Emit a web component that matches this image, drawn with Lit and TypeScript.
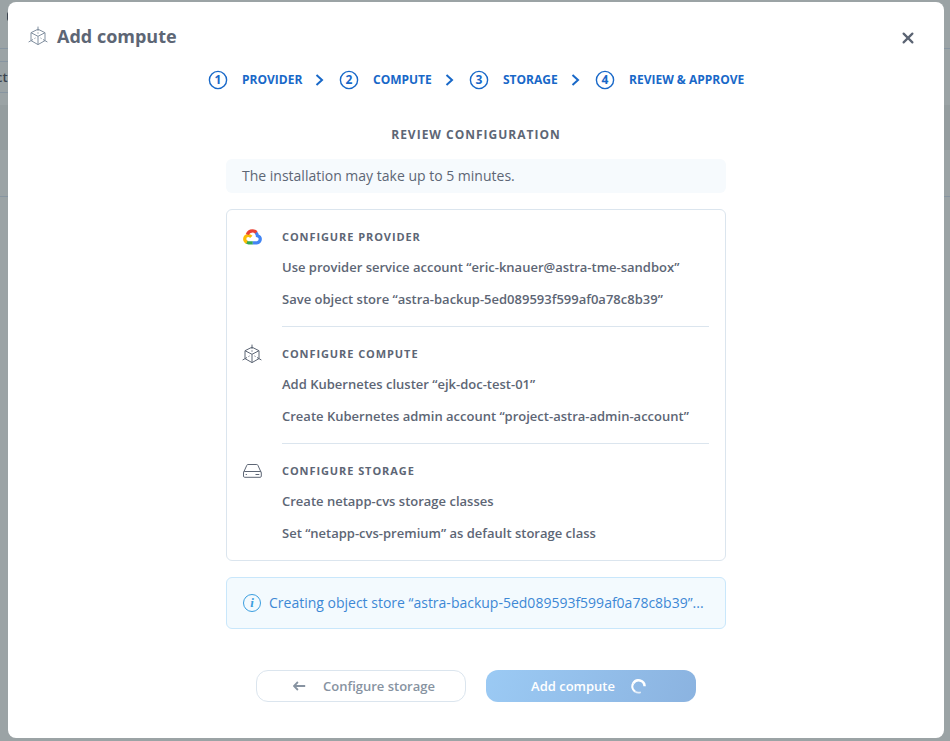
import { LitElement, html, svg, css, nothing } from "lit";
import { customElement } from "lit/decorators.js";

const cube = svg`<svg class="icon" width="20" height="20" viewBox="0 0 20 20" fill="none" stroke="currentColor" stroke-width="1">
  <path d="M10 3.2 17 6.7V14.6L10 18.6 3 14.6V6.7Z M3 6.7 10 10.3 17 6.7 M10 10.3V18.6"/>
  <path d="M10 .6V5 M.6 16 5 13.5 M19.4 16 15 13.5" />
  <path d="M10 6.2V7.8 M6.4 12.6 7.6 11.9 M13.6 12.6 12.4 11.9" stroke-width=".8"/>
</svg>`;

const cloud = svg`<svg class="icon" width="20" height="20" viewBox="-0.5 0 20 20" fill="none" stroke-width="3.2">
  <path stroke="#4285f4" d="M13.2 5.4C14.3 6.3 14.8 7.4 14.9 8.7C16.7 9.1 17.8 10.3 17.8 12.1C17.8 14.2 16.4 15.8 14.3 15.8H10"/>
  <path stroke="#34a853" d="M10.2 15.8H6C5.1 15.8 4.5 15.6 3.8 15.2"/>
  <path stroke="#fbbc05" d="M4.5 15.3C3 14.6 2.2 13.4 2.2 12C2.2 10 3.8 8.5 5.8 8.5C7 8.5 8 9 8.8 9.9"/>
  <path stroke="#ea4335" d="M4.8 7.6C5.6 5.2 7.4 3.8 9.9 3.8C11.5 3.8 12.8 4.4 13.9 5.5"/>
</svg>`;

const disk = svg`<svg class="icon" width="20" height="20" viewBox="-0.5 0 20 20" fill="none" stroke="currentColor" stroke-width="1">
  <path d="M1 11.6 4.3 4.3Q4.6 3.5 5.3 3.5H14.3Q15 3.5 15.4 4.3L18.6 11.3"/>
  <rect x="1" y="10.5" width="17.8" height="5.8" rx="1.2"/>
  <path d="M3.2 13.5H4.4 M13 13.5H16.8"/>
</svg>`;

@customElement("app-root")
export class AppRoot extends LitElement {
  static styles = css`
    :host {
      display: block;
      position: relative;
      height: 741px;
      overflow: hidden;
      box-sizing: border-box;
      padding: 2px 6px 3px 8px;
      background: #9ba3a5;
      color: #5d6675;
      font-family: "Open Sans", "Noto Sans", sans-serif;
    }
    * { box-sizing: border-box; }
    svg { display: block; flex: none; }
    .behind {
      position: absolute;
      inset: 0;
      display: grid;
      grid-template-rows: 49px 13px 31px 12px 45px 47px 1fr;
    }
    .behind div { border-bottom: 1px solid #8795a1; }
    .behind .plain { border: 0; }
    .behind .band { border: 0; background: #959d9f; }
    .behind .inset { width: 50%; }
    .peek {
      position: absolute;
      left: -4px;
      top: 68px;
      font: 600 13px/18px "Open Sans", sans-serif;
      color: #3c444f;
    }
    .peek-title {
      position: absolute;
      left: 7px;
      top: 12px;
      width: 4px;
      height: 9px;
      border-radius: 4px;
      background: #3c444f;
    }
    .dialog {
      position: relative;
      height: 736px;
      border-radius: 8px;
      background: #fff;
      display: flex;
      flex-direction: column;
      align-items: center;
    }
    .head {
      align-self: stretch;
      height: 68px;
      padding: 0 30px 0 19.5px;
      display: flex;
      align-items: center;
      color: #5d6675;
    }
    .head .icon { color: #8290a0; }
    h1 {
      margin: 0 auto 0 9.5px;
      font-size: 18px;
      line-height: 26px;
      font-weight: 700;
    }
    .close { margin-top: 4px; }
    .steps {
      display: flex;
      align-items: center;
      height: 20px;
      color: #1868c8;
      font-size: 12px;
      font-weight: 700;
      line-height: 16px;
    }
    .num { margin-right: 14px; }
    .label { white-space: nowrap; }
    .chev { margin: 0 15px 0 13px; }
    h2 {
      margin: 37px 0 0;
      font-size: 12px;
      line-height: 16px;
      letter-spacing: 1px;
      font-weight: 700;
    }
    .note {
      margin-top: 16px;
      width: 500px;
      height: 34px;
      padding: 0 16px;
      border-radius: 6px;
      background: #f6fafd;
      font-size: 14px;
      line-height: 34px;
    }
    .card {
      margin-top: 16px;
      width: 500px;
      height: 352px;
      border: 1px solid #dbe5ee;
      border-radius: 6px;
      padding: 0 16px 0 15px;
    }
    .row {
      height: 117px;
      display: flex;
      gap: 20px;
    }
    .row > .icon { margin-top: 17px; }
    .body {
      flex: 1;
      padding-top: 19px;
      border-bottom: 1px solid #dbe5ee;
      white-space: nowrap;
    }
    .row:last-child .body { border: 0; }
    h3 {
      margin: 0 0 7px;
      font-size: 11px;
      line-height: 15px;
      letter-spacing: 0.92px;
      font-weight: 700;
    }
    p {
      margin: 0;
      font-size: 13px;
      line-height: 32px;
      font-weight: 600;
    }
    .status {
      margin-top: 16px;
      width: 500px;
      height: 52px;
      border: 1px solid #c9e7fb;
      border-radius: 6px;
      background: #f3fafe;
      display: flex;
      align-items: center;
      gap: 8px;
      padding: 0 16px;
      color: #3d88d5;
      font-size: 14px;
      white-space: nowrap;
    }
    .message { padding-bottom: 2px; }
    .info {
      width: 18px;
      height: 18px;
      border: 1px solid #3a9ee0;
      border-radius: 50%;
      color: #3a9ee0;
      font: italic 700 13px/16px "Liberation Serif", serif;
      text-align: center;
    }
    .actions { display: flex; gap: 20px; margin-top: 41px; }
    .btn {
      width: 210px;
      height: 32px;
      border-radius: 12px;
      display: flex;
      align-items: center;
      justify-content: center;
      gap: 17px;
      padding-left: 6px;
      font-size: 13px;
      font-weight: 600;
      color: #8793a1;
      border: 1px solid #dbe5ee;
    }
    .primary {
      border: 0;
      padding: 0 5px 0 0;
      gap: 16px;
      color: #fff;
      background: linear-gradient(110deg, #9bcaf4, #8bb3e0);
    }
  `;

  private steps = ["PROVIDER", "COMPUTE", "STORAGE", "REVIEW & APPROVE"];
  private widths = [60, 59, 55, 115];

  private sections = [
    { icon: cloud, title: "CONFIGURE PROVIDER", lines: ["Use provider service account “eric-knauer@astra-tme-sandbox”", "Save object store “astra-backup-5ed089593f599af0a78c8b39”"] },
    { icon: cube, title: "CONFIGURE COMPUTE", lines: ["Add Kubernetes cluster “ejk-doc-test-01”", "Create Kubernetes admin account “project-astra-admin-account”"] },
    { icon: disk, title: "CONFIGURE STORAGE", lines: ["Create netapp-cvs storage classes", "Set “netapp-cvs-premium” as default storage class"] },
  ];

  render() {
    return html`
      <div class="behind">
        <div></div><div class="inset"></div><div class="inset"></div>
        <div class="plain"></div><div class="band"></div><div></div><div class="plain"></div>
      </div>
      <span class="peek">ct</span>
      <span class="peek-title"></span>
      <section class="dialog">
        <header class="head">
          ${cube}
          <h1>Add compute</h1>
          <svg class="close" width="12" height="12" viewBox="0 0 12 12" stroke="#5b6473" stroke-width="2.2" stroke-linecap="round"><path d="M1.6 1.6 10.4 10.4 M10.4 1.6 1.6 10.4"/></svg>
        </header>
        <nav class="steps">
          ${this.steps.map((s, i) => html`
            <svg class="num" width="20" height="20" viewBox="0 0 20 20">
              <circle cx="10" cy="10" r="8.6" fill="none" stroke="#1868c8" stroke-width="1.4"/>
              <text x="10" y="14" text-anchor="middle" fill="#1868c8">${i + 1}</text>
            </svg>
            <span class="label" style="width:${this.widths[i]}px">${s}</span>
            ${i < 3 ? html`<svg class="chev" width="9" height="12" viewBox="0 0 9 12" fill="none" stroke="#1868c8" stroke-width="2"><path d="M1.5 1 7 6 1.5 11"/></svg>` : nothing}
          `)}
        </nav>
        <h2>REVIEW CONFIGURATION</h2>
        <div class="note">The installation may take up to 5 minutes.</div>
        <div class="card">
          ${this.sections.map((s) => html`
            <div class="row">
              ${s.icon}
              <div class="body"><h3>${s.title}</h3>${s.lines.map((l) => html`<p>${l}</p>`)}</div>
            </div>`)}
        </div>
        <div class="status"><span class="info">i</span><span class="message">Creating object store “astra-backup-5ed089593f599af0a78c8b39”...</span></div>
        <div class="actions">
          <div class="btn">
            <svg width="13" height="10" viewBox="0 0 13 10" fill="none" stroke="#8793a1" stroke-width="1.8"><path d="M4.9 1 .9 5 4.9 9 M.9 5H12.2"/></svg>
            <span>Configure storage</span>
          </div>
          <div class="btn primary">
            <span>Add compute</span>
            <svg width="15" height="15" viewBox="0 0 15 15" fill="none" stroke="#fff" stroke-width="2.5">
              <path d="M13.6 7.2A6.1 6.1 0 0 0 2.2 4.4"/>
              <path d="M2.2 4.4A6.1 6.1 0 0 0 4 12.5" stroke-width="2.2"/>
              <path d="M4 12.5A6.1 6.1 0 0 0 9.8 13.2" stroke-width="1.6" opacity=".75"/>
            </svg>
          </div>
        </div>
      </section>
    `;
  }
}
